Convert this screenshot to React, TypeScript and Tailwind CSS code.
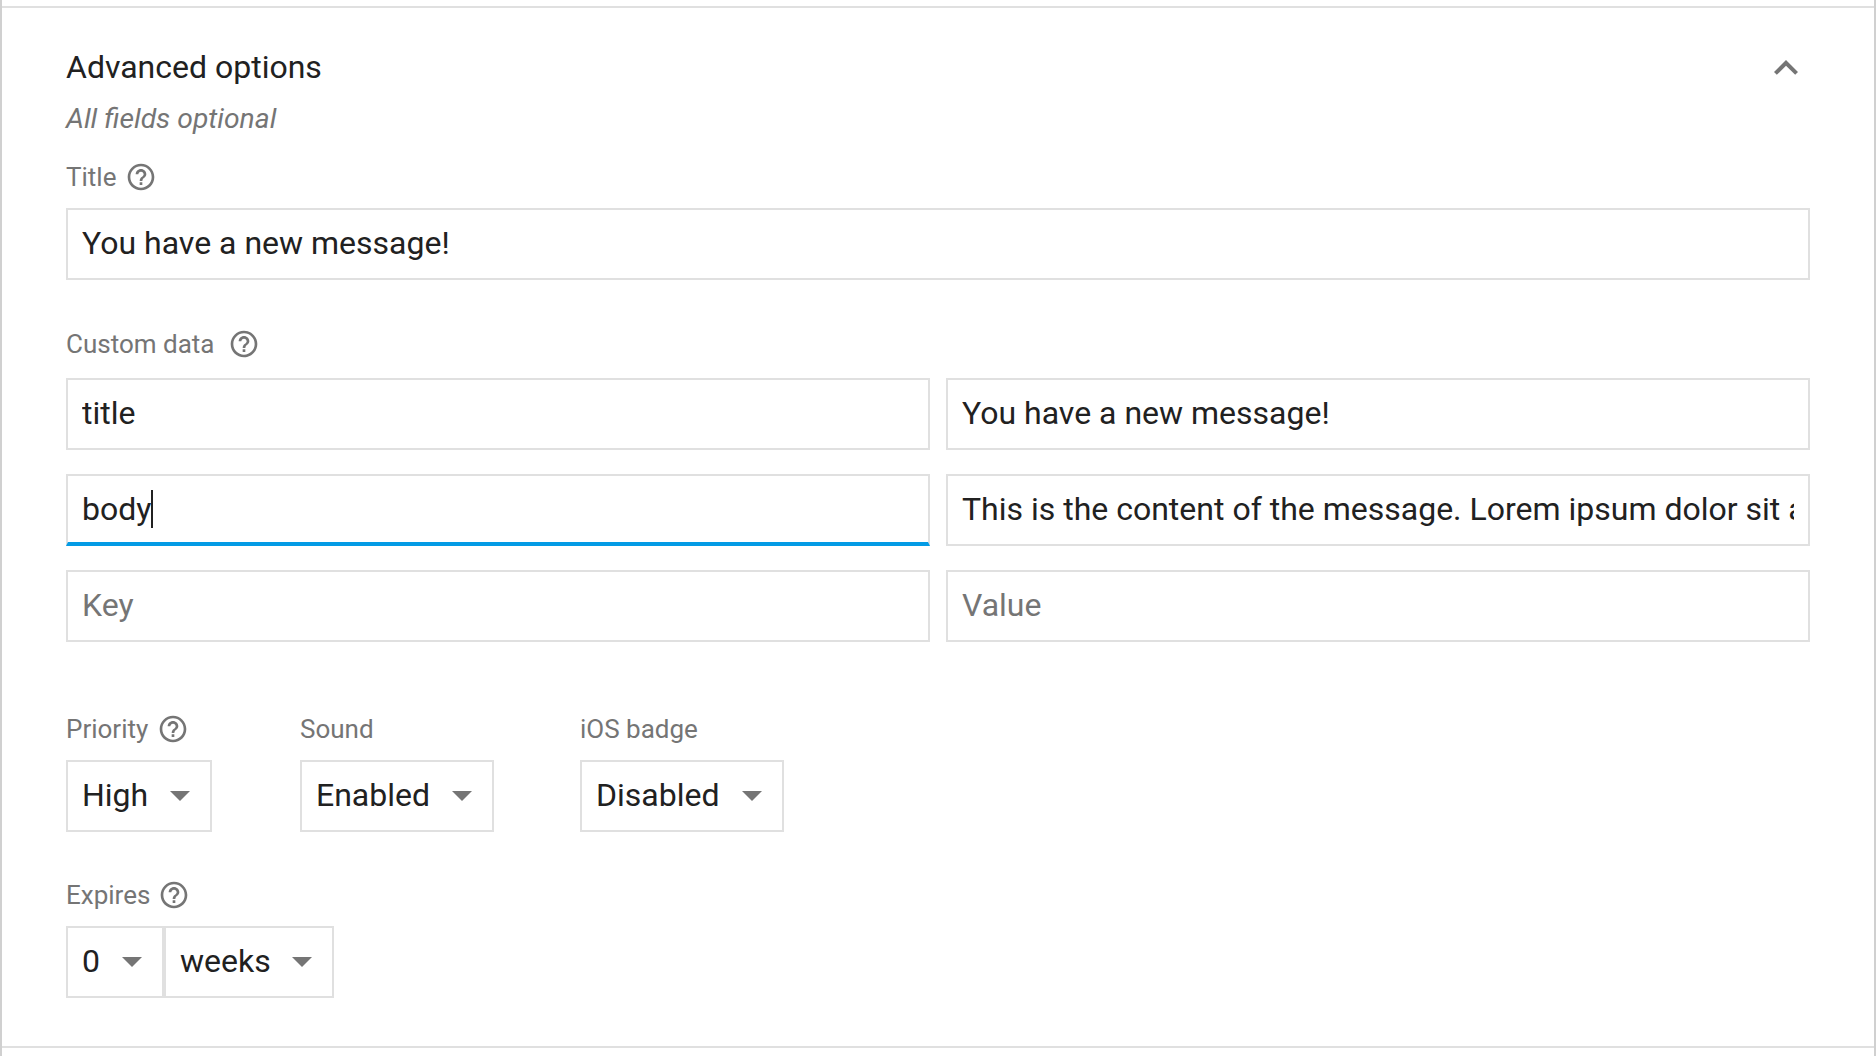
import React from "react";

const F = "font-['Roboto',sans-serif]";

function Help({ className = "" }: { className?: string }) {
  return (
    <svg viewBox="0 0 24 24" className={"h-8 w-8 shrink-0 fill-[#757575] " + className}>
      <path d="M11 18h2v-2h-2v2zm1-16C6.48 2 2 6.48 2 12s4.48 10 10 10 10-4.48 10-10S17.52 2 12 2zm0 18c-4.41 0-8-3.59-8-8s3.59-8 8-8 8 3.59 8 8-3.59 8-8 8zm0-14c-2.21 0-4 1.79-4 4h2c0-1.1.9-2 2-2s2 .9 2 2c0 2-3 1.75-3 5h2c0-2.25 3-2.5 3-5 0-2.21-1.79-4-4-4z" />
    </svg>
  );
}

function Label({ text, gap, help = true }: { text: string; gap?: string; help?: boolean }) {
  return (
    <div className="mb-[14px] flex h-[34px] items-center text-[26px] text-[#757575]">
      <span>{text}</span>
      {help && <Help className={gap} />}
    </div>
  );
}

function Field({ value, placeholder, className = "" }: { value?: string; placeholder?: string; className?: string }) {
  return (
    <input
      readOnly
      value={value ?? ""}
      placeholder={placeholder}
      className={
        "block h-[72px] min-w-0 border-2 border-[#e0e0e0] bg-white px-[14px] pb-[2px] text-[32px] text-[#212121] outline-none placeholder:text-[#757575] " +
        className
      }
    />
  );
}

function Select({ text, className = "" }: { text: string; className?: string }) {
  return (
    <div
      className={
        "flex h-[72px] items-center justify-between border-2 border-[#e0e0e0] bg-white pl-[14px] pr-[20px] text-[32px] text-[#212121] " +
        className
      }
    >
      <span className="pb-[2px]">{text}</span>
      <svg viewBox="0 0 20 10" className="h-[10px] w-5 fill-[#757575]">
        <path d="M0 0h20L10 10z" />
      </svg>
    </div>
  );
}

export default function App() {
  return (
    <div className={"h-[1056px] w-[1876px] border-x-2 border-[#d0d0d0] bg-white pt-[6px] " + F}>
      <div className="h-[1042px] border-y-2 border-[#e0e0e0] px-[64px] pt-[36px]">
        <div className="flex h-12 items-center justify-between">
          <h2 className="pb-[2px] text-[32px] font-normal text-[#212121]">Advanced options</h2>
          <svg viewBox="0 0 24 24" className="h-12 w-12 fill-[#757575]">
            <path d="M12 8l-6 6 1.41 1.41L12 10.83l4.59 4.58L18 14z" />
          </svg>
        </div>
        <p className="mb-[14px] flex h-[54px] items-center text-[28.3px] italic text-[#757575]">All fields optional</p>

        <Label text="Title" gap="ml-[9px]" />
        <Field value="You have a new message!" className="w-full" />

        <div className="mt-[47px] mb-[17px]">
          <Label text="Custom data" gap="ml-[14px]" />
        </div>
        <div className="flex flex-col gap-6">
          <div className="flex gap-4">
            <Field value="title" className="flex-1" />
            <Field value="You have a new message!" className="flex-1" />
          </div>
          <div className="flex gap-4">
            <div className="flex h-[72px] flex-1 items-center border-x-2 border-t-2 border-b-4 border-x-[#e0e0e0] border-t-[#e0e0e0] border-b-[#039be5] px-[14px] text-[32px] text-[#212121]">
              <span>body</span>
              <span className="h-[38px] w-[2px] bg-[#212121]" />
            </div>
            <Field value="This is the content of the message. Lorem ipsum dolor sit amet" className="flex-1" />
          </div>
          <div className="flex gap-4">
            <Field placeholder="Key" className="flex-1" />
            <Field placeholder="Value" className="flex-1" />
          </div>
        </div>

        <div className="mt-[70px] flex">
          <div className="w-[234px]">
            <Label text="Priority" gap="ml-[9px]" />
            <Select text="High" className="w-[146px]" />
          </div>
          <div className="w-[280px]">
            <Label text="Sound" help={false} />
            <Select text="Enabled" className="w-[194px]" />
          </div>
          <div>
            <Label text="iOS badge" help={false} />
            <Select text="Disabled" className="w-[204px]" />
          </div>
        </div>

        <div className="mt-[46px]">
          <Label text="Expires" gap="ml-2" />
          <div className="flex">
            <Select text="0" className="w-[98px]" />
            <Select text="weeks" className="w-[170px]" />
          </div>
        </div>
      </div>
    </div>
  );
}
